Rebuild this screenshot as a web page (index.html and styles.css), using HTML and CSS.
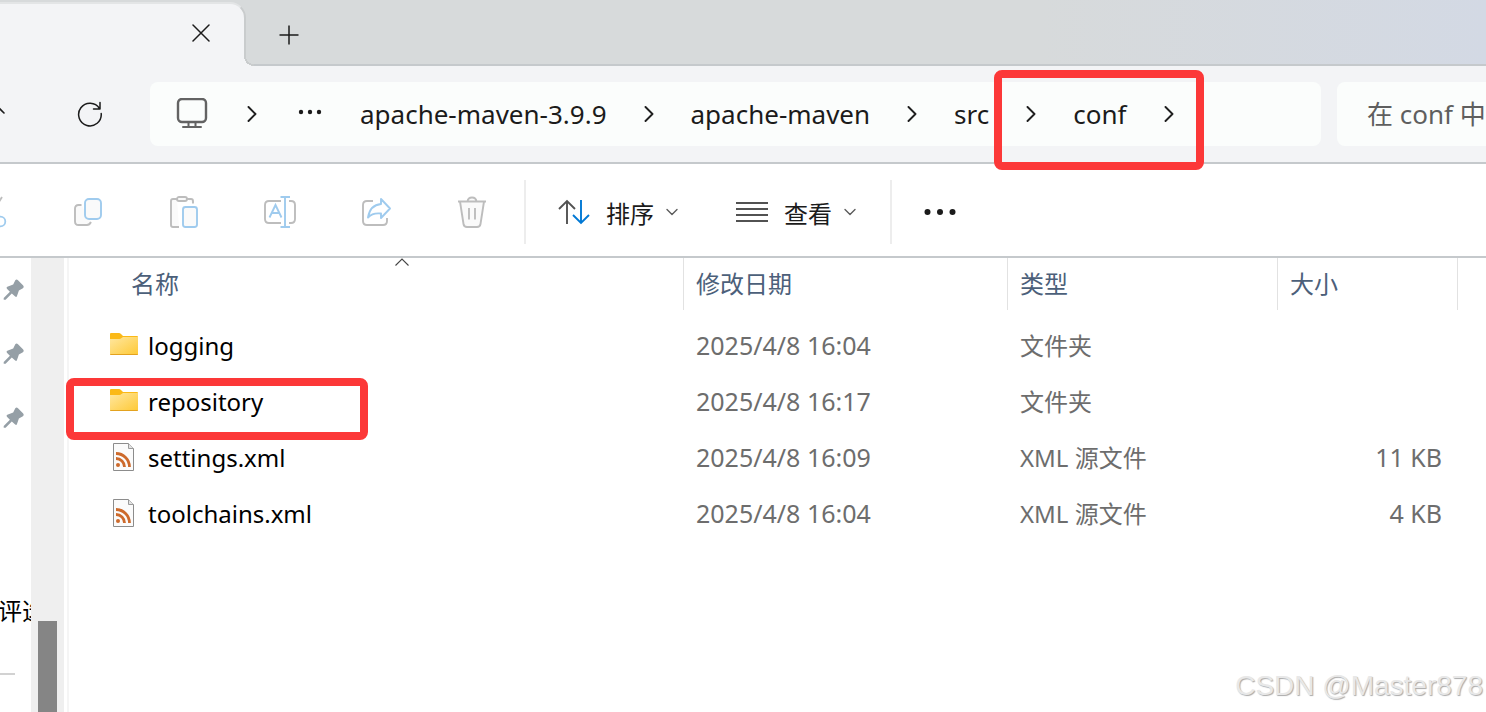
FILE: index.html
```html
<!DOCTYPE html>
<html lang="zh-CN">

<head>
    <meta charset="UTF-8">
    <meta name="viewport" content="width=device-width, initial-scale=1.0">
    <title>conf</title>
    <link rel="stylesheet" href="styles.css">
</head>

<body>
    <!-- shared icons -->
    <svg class="sprite" aria-hidden="true">
        <symbol id="chevron" viewBox="0 0 16 16">
            <path d="M4.500 1L11.500 8L4.500 15" fill="none" stroke="#1f1f1f" stroke-width="1.900" stroke-linecap="round" stroke-linejoin="round"/>
        </symbol>
        <symbol id="caret" viewBox="0 0 12 12">
            <path d="M1 3.500L6 8.500L11 3.500" fill="none" stroke="#5c5c5c" stroke-width="1.400" stroke-linecap="round" stroke-linejoin="round"/>
        </symbol>
        <symbol id="pin" viewBox="0 0 22 22">
            <path d="M12.300 1.300Q13.500 0 15 1.200L20.200 6.500Q21.600 8.200 19.900 9.200L15.900 11.500L13.900 17.200Q13.300 18.600 12.200 17.500L8.800 14.500L2.600 20.700H0.700V18.900L6.900 12.700L3.900 9.700Q3 8.300 4.300 7.700L10.200 5.600Z" fill="#959fa6"/>
        </symbol>
        <symbol id="folder" viewBox="0 0 28 22">
            <path d="M0 1Q0 0 1 0H9Q10 0 11 1L13 3H27Q28 3 28 4V11H0Z" fill="#fbb917"/>
            <path d="M0 6H9.500Q10.500 6 11.500 5L13 4H28V21Q28 22 27 22H1Q0 22 0 21Z" fill="url(#folderFill)"/>
            <path d="M0 21H28Q28 22 27 22H1Q0 22 0 21Z" fill="#e3a21f"/>
        </symbol>
        <symbol id="xml" viewBox="0 0 22 28">
            <path d="M0.500 0.500H15.500L20.500 5.500V27.500H0.500Z" fill="#fbfbfb" stroke="#8c8c8c"/>
            <path d="M15.500 0.500V5.500H20.500" fill="#e3e3e3" stroke="#9a9a9a"/>
            <circle cx="5" cy="22" r="2" fill="#cd6a2c"/>
            <path d="M3 15.500A8.500 8.500 0 0 1 11.500 24M3 10.500A13.500 13.500 0 0 1 16.500 24" fill="none" stroke="#cd6a2c" stroke-width="2.800"/>
        </symbol>
        <linearGradient id="folderFill" x1="0" y1="0" x2="1" y2="1">
            <stop offset="0" stop-color="#ffe7a0"/>
            <stop offset="1" stop-color="#fec935"/>
        </linearGradient>
    </svg>

    <div class="window">
        <header class="tab-strip">
            <div class="tab">
                <button class="icon-btn" aria-label="关闭标签页">
                    <svg width="18" height="18" viewBox="0 0 18 18"><path d="M1 1L17 17M17 1L1 17" stroke="#1b1b1b" stroke-width="1.500" stroke-linecap="round"/></svg>
                </button>
            </div>
            <div class="tab-rest">
                <button class="icon-btn" aria-label="新建标签页">
                    <svg width="20" height="20" viewBox="0 0 20 20"><path d="M10 0.500V19.500M0.500 10H19.500" stroke="#1b1b1b" stroke-width="1.500"/></svg>
                </button>
            </div>
        </header>

        <nav class="nav-bar">
            <button class="icon-btn up-btn" aria-label="上移">
                <svg width="26" height="26" viewBox="0 0 26 26"><path d="M3 12L13 2L23 12M13 2V24" fill="none" stroke="#1b1b1b" stroke-width="1.600" stroke-linecap="round"/></svg>
            </button>
            <button class="icon-btn refresh-btn" aria-label="刷新">
                <svg width="26" height="26" viewBox="0 0 26 26"><path d="M24.200 12.500A11.300 11.300 0 1 1 22.500 7.500M23 1.500V8H16.500" fill="none" stroke="#1b1b1b" stroke-width="1.500" stroke-linecap="round" stroke-linejoin="round"/></svg>
            </button>
            <div class="breadcrumb">
                <svg width="34" height="32" viewBox="0 0 34 32"><g fill="none" stroke="#636363" stroke-width="2"><rect x="2" y="1" width="28" height="23" rx="4" stroke-width="2.400"/><path d="M12.500 24V29M19.500 24V29M7 29H25" stroke-linecap="round"/></g></svg>
                <svg class="chevron"><use href="#chevron"/></svg>
                <button class="icon-btn" aria-label="更多位置">
                    <svg width="32" height="10" viewBox="0 0 32 10"><g fill="#1b1b1b"><circle cx="7" cy="3" r="2.200"/><circle cx="16" cy="3" r="2.200"/><circle cx="25" cy="3" r="2.200"/></g></svg>
                </button>
                <a href="#">apache-maven-3.9.9</a>
                <svg class="chevron"><use href="#chevron"/></svg>
                <a href="#">apache-maven</a>
                <svg class="chevron"><use href="#chevron"/></svg>
                <a href="#">src</a>
                <svg class="chevron"><use href="#chevron"/></svg>
                <a href="#">conf</a>
                <svg class="chevron"><use href="#chevron"/></svg>
            </div>
            <input class="search" type="text" placeholder="在 conf 中搜索" aria-label="搜索">
        </nav>

        <div class="toolbar">
            <div class="tools">
                <button aria-label="剪切">
                    <svg width="32" height="32" viewBox="0 0 32 32"><g fill="none" stroke-width="1.800"><path d="M8 1L19 21M26 1L14 21" stroke="#bdbdbd"/><circle cx="24.500" cy="25.500" r="4.800" stroke="#9fcbee"/><circle cx="8" cy="25.500" r="4.800" stroke="#9fcbee"/></g></svg>
                </button>
                <button aria-label="复制">
                    <svg width="32" height="32" viewBox="0 0 32 32"><g fill="#fafafa" stroke-width="1.900"><path d="M9.500 9H6.500Q3 9 3 12.500V25.500Q3 29 6.500 29H15Q17.500 29 19 26" stroke="#bdbdbd"/><rect x="13" y="3" width="16" height="20" rx="4" stroke="#9fcbee"/></g></svg>
                </button>
                <button aria-label="粘贴">
                    <svg width="32" height="32" viewBox="0 0 32 32"><g fill="#fafafa" stroke-width="1.900"><path d="M11 31H5Q3 31 3 29V5Q3 3 5 3H9M19 3H23Q25 3 25 5V7.500" stroke="#bdbdbd"/><rect x="9" y="1" width="10" height="4" rx="2" stroke="#bdbdbd"/><rect x="15" y="11" width="14" height="20" rx="2.500" stroke="#9fcbee"/></g></svg>
                </button>
                <button aria-label="重命名">
                    <svg width="32" height="32" viewBox="0 0 32 32"><g fill="none" stroke-width="1.900"><path d="M17 5H5Q1 5 1 9V23Q1 27 5 27H17M25 5H27Q31 5 31 9V23Q31 27 27 27H25" stroke="#bdbdbd"/><path d="M16.500 1H26M16.500 31H26M21 1V31M5.500 21.500L11.500 9L17.500 21.500M7.500 17H15.500" stroke="#9fcbee"/></g></svg>
                </button>
                <button aria-label="共享">
                    <svg width="32" height="32" viewBox="0 0 32 32"><g fill="none" stroke-width="1.900" stroke-linejoin="round"><path d="M13 5H7Q3 5 3 9V25Q3 29 7 29H23Q27 29 27 25V22" stroke="#bdbdbd"/><path d="M21 3L30 12.500L21 22V17.500Q12.500 16.500 8 21.500Q10 9 21 8Z" stroke="#9fcbee"/></g></svg>
                </button>
                <button aria-label="删除">
                    <svg width="32" height="32" viewBox="0 0 32 32"><g fill="#fafafa" stroke="#bdbdbd" stroke-width="1.900"><path d="M4 5.500L7.500 28Q8 31 11 31H21Q24 31 24.500 28L28 5.500"/><path d="M2 5.500H30M11.500 5.500Q12 1.500 16 1.500T20.500 5.500M13 12V23.500M19 12V23.500"/></g></svg>
                </button>
            </div>
            <div class="tool-group">
                <button class="menu-btn">
                    <svg width="32" height="26" viewBox="0 0 32 26"><g fill="none" stroke-width="1.900"><path d="M9 25V2M1 10L9 2L17 10" stroke="#525252"/><path d="M23 1V24M15 16L23 24L31 16" stroke="#0078d4"/></g></svg>
                    <span>排序</span>
                    <svg width="12" height="12"><use href="#caret"/></svg>
                </button>
                <button class="menu-btn">
                    <svg width="32" height="22" viewBox="0 0 32 22"><path d="M0 2H32M0 8H32M0 14H32M0 20H32" stroke="#525252" stroke-width="1.900"/></svg>
                    <span>查看</span>
                    <svg width="12" height="12"><use href="#caret"/></svg>
                </button>
            </div>
            <button class="more-btn" aria-label="查看更多">
                <svg width="32" height="8" viewBox="0 0 32 8"><g fill="#1b1b1b"><circle cx="3.500" cy="4" r="3"/><circle cx="16" cy="4" r="3"/><circle cx="28.500" cy="4" r="3"/></g></svg>
            </button>
        </div>

        <div class="content">
            <aside class="sidebar">
                <ul class="pins">
                    <li><svg width="22" height="22"><use href="#pin"/></svg></li>
                    <li><svg width="22" height="22"><use href="#pin"/></svg></li>
                    <li><svg width="22" height="22"><use href="#pin"/></svg></li>
                </ul>
                <div class="side-label">评选</div>
                <hr>
            </aside>
            <div class="scrollbar">
                <div class="thumb"></div>
            </div>
            <main class="files">
                <table>
                    <colgroup>
                        <col class="col-name">
                        <col class="col-date">
                        <col class="col-type">
                        <col class="col-size">
                        <col>
                    </colgroup>
                    <thead>
                        <tr>
                            <th>名称
                                <svg class="sort-mark" width="14" height="8" viewBox="0 0 14 8"><path d="M0.500 7.500L7 1L13.500 7.500" fill="none" stroke="#444" stroke-width="1.100"/></svg>
                            </th>
                            <th>修改日期</th>
                            <th>类型</th>
                            <th>大小</th>
                            <td></td>
                        </tr>
                    </thead>
                    <tbody>
                        <tr>
                            <td><svg class="file-icon folder-icon" width="28" height="22"><use href="#folder"/></svg>logging</td>
                            <td>2025/4/8 16:04</td>
                            <td>文件夹</td>
                            <td></td>
                            <td></td>
                        </tr>
                        <tr>
                            <td><svg class="file-icon folder-icon" width="28" height="22"><use href="#folder"/></svg>repository</td>
                            <td>2025/4/8 16:17</td>
                            <td>文件夹</td>
                            <td></td>
                            <td></td>
                        </tr>
                        <tr>
                            <td><svg class="file-icon" width="28" height="28"><use href="#xml"/></svg>settings.xml</td>
                            <td>2025/4/8 16:09</td>
                            <td>XML 源文件</td>
                            <td>11 KB</td>
                            <td></td>
                        </tr>
                        <tr>
                            <td><svg class="file-icon" width="28" height="28"><use href="#xml"/></svg>toolchains.xml</td>
                            <td>2025/4/8 16:04</td>
                            <td>XML 源文件</td>
                            <td>4 KB</td>
                            <td></td>
                        </tr>
                    </tbody>
                </table>
            </main>
        </div>

        <!-- red marks -->
        <div class="mark mark-path"></div>
        <div class="mark mark-folder"></div>
        <div class="watermark">CSDN @Master878</div>
    </div>
</body>

</html>
```

FILE: styles.css
```css
* {
    box-sizing: border-box;
}

body {
    margin: 0;
    background-color: #fff;
    color: #1b1b1b;
    font-family: "Noto Sans", "Noto Sans CJK SC", sans-serif;
    font-size: 24px;
}

button {
    display: flex;
    align-items: center;
    justify-content: center;
    padding: 0;
    border: none;
    background: none;
    color: inherit;
    font: inherit;
    cursor: pointer;
}

svg {
    display: block;
    flex-shrink: 0;
}

.sprite {
    position: absolute;
    width: 0;
    height: 0;
}

.window {
    position: relative;
    display: flex;
    flex-direction: column;
    min-height: 100vh;
    overflow: hidden;
}

/* tabs */
.tab-strip {
    display: flex;
    height: 66px;
    padding-top: 2px;
    background: linear-gradient(90deg, #d7dadb 70%, #d3d9e4);
}

.tab {
    position: relative;
    display: flex;
    align-items: center;
    justify-content: flex-end;
    width: 246px;
    padding: 0 34px 4px 0;
    border: solid #c9cccd;
    border-width: 2px 2px 0 0;
    border-top-color: #e3e5e6;
    border-radius: 0 16px 0 0;
    background-color: #f3f4f6;
}

.tab::after {
    content: "";
    position: absolute;
    right: -10px;
    bottom: 0;
    width: 10px;
    height: 10px;
    background: radial-gradient(circle at top right, #d7dadb 8px, #c9cccd 8px, #c9cccd 10px, #f3f4f6 10px);
}

.tab-rest {
    display: flex;
    flex: 1;
    align-items: center;
    padding: 4px 0 0 33px;
    border-bottom: 2px solid #c5c9cc;
}

/* address bar */
.nav-bar {
    display: flex;
    align-items: center;
    padding: 16px 0;
    border-bottom: 2px solid #c5c9cc;
    background-color: #f3f4f6;
    font-size: 26px;
}

.up-btn {
    width: 26px;
    margin-left: -19px;
}

.refresh-btn {
    width: 26px;
    margin: 0 47px 0 70px;
}

.breadcrumb {
    display: flex;
    flex: 1;
    align-items: center;
    gap: 34px;
    height: 64px;
    padding-left: 26px;
    border-radius: 8px;
    background-color: #fbfdfc;
    white-space: nowrap;
}

.breadcrumb a {
    color: #1b1b1b;
    text-decoration: none;
}

.chevron {
    width: 16px;
    height: 16px;
}

.search {
    width: 149px;
    height: 64px;
    margin-left: 16px;
    padding: 0 0 0 30px;
    border: none;
    border-radius: 8px 0 0 8px;
    background-color: #fbfdfc;
    font: inherit;
}

.search::placeholder {
    color: #5f5f5f;
    opacity: 1;
}

/* command bar */
.toolbar {
    display: flex;
    align-items: center;
    height: 94px;
    padding-top: 4px;
    border-bottom: 2px solid #c5c9cc;
}

.tools {
    display: flex;
    margin-left: -56px;
    padding-right: 4px;
}

.tools button {
    width: 96px;
    height: 64px;
}

.tool-group {
    display: flex;
    gap: 58px;
    height: 64px;
    padding: 0 34px 0 32px;
    border: solid #ededed;
    border-width: 0 2px;
}

.menu-btn span {
    margin: 0 12px 0 16px;
}

.more-btn {
    height: 64px;
    margin-left: 32px;
}

/* file list */
.content {
    display: flex;
    flex: 1;
}

.sidebar {
    width: 31px;
    overflow: hidden;
}

.pins {
    margin: 0;
    padding: 0 0 0 3px;
    list-style: none;
}

.pins li {
    display: flex;
    align-items: center;
    height: 64px;
}

.side-label {
    margin: 144px 0 0 -2px;
    line-height: 34px;
    color: #000;
    white-space: nowrap;
}

.sidebar hr {
    width: 15px;
    height: 2px;
    margin: 45px 0 0;
    border: none;
    background-color: #d2d2d2;
}

.scrollbar {
    display: flex;
    width: 33px;
    padding: 363px 7px 0;
    background-color: #efefef;
}

.thumb {
    flex: 1;
    background-color: #858585;
}

.files {
    flex: 1;
    margin-left: 3px;
    border-left: 2px solid #f5f5f5;
}

table {
    width: 100%;
    border-collapse: separate;
    border-spacing: 0;
    table-layout: fixed;
}

.col-name {
    width: 615px;
}

.col-date {
    width: 324px;
}

.col-type {
    width: 270px;
}

.col-size {
    width: 180px;
}

th {
    position: relative;
    height: 52px;
    padding: 0 0 4px 12px;
    border-right: 1px solid #e2e2e2;
    color: #4c607a;
    font-weight: normal;
    text-align: left;
}

th:first-child {
    padding-left: 62px;
}

.sort-mark {
    position: absolute;
    top: 0;
    left: 326px;
}

tbody::before {
    content: "";
    display: block;
    height: 8px;
}

tbody td {
    height: 56px;
    padding: 0 0 2px 12px;
    color: #6d6d6d;
    font-size: 25px;
}

tbody td:first-child {
    padding-left: 41px;
    color: #000;
    font-size: 24px;
}

tbody td:nth-child(3) {
    padding-bottom: 4px;
    font-size: 24px;
}

tbody td:nth-child(4) {
    padding-right: 16px;
    text-align: right;
}

.file-icon {
    display: inline-block;
    margin-right: 10px;
    vertical-align: -4px;
}

.folder-icon {
    vertical-align: 0;
}

/* overlays */
.mark {
    position: absolute;
    border: 8px solid #fc3838;
    border-radius: 8px;
}

.mark-path {
    top: 70px;
    left: 994px;
    width: 210px;
    height: 100px;
}

.mark-folder {
    top: 378px;
    left: 66px;
    width: 302px;
    height: 62px;
}

.watermark {
    position: absolute;
    right: 3px;
    bottom: 10px;
    color: #e8e8e8;
    font-family: "Liberation Sans", sans-serif;
    font-size: 28px;
    line-height: 32px;
    text-shadow: 1px 1px 1px #aaa;
}
```
